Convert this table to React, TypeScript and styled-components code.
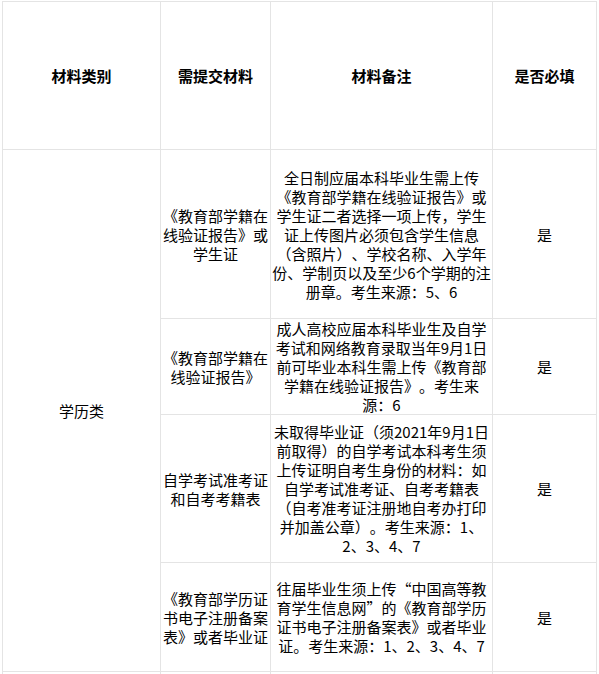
import React from 'react';
import styled, { createGlobalStyle } from 'styled-components';

const GlobalStyle = createGlobalStyle`
  html, body {
    margin: 0;
    padding: 0;
    background: #ffffff;
    overflow: hidden;
  }
  body {
    font-family: "Noto Sans CJK SC", "Noto Sans", sans-serif;
    color: #000000;
  }
`;

const Page = styled.div`
  padding: 1px 0 0 2px;
`;

const Table = styled.table`
  width: 594px;
  table-layout: fixed;
  border-collapse: collapse;
  font-size: 15px;
  line-height: 19px;
  text-spacing-trim: space-all;
  font-feature-settings: "fwid" 0;
`;

const Row = styled.tr<{ $h: number }>`
  height: ${(p) => p.$h}px;
`;

const HeadCell = styled.th`
  border: 1px solid #e4e4e4;
  font-weight: 700;
  text-align: center;
  vertical-align: middle;
  padding: 0;
`;

const Cell = styled.td`
  border: 1px solid #e4e4e4;
  text-align: center;
  vertical-align: middle;
  padding: 0;
  white-space: nowrap;
`;

type Item = {
  h: number;
  material: string[];
  note: string[];
  required: string;
};

const items: Item[] = [
  {
    h: 169,
    material: ['《教育部学籍在', '线验证报告》或', '学生证'],
    note: [
      '全日制应届本科毕业生需上传',
      '《教育部学籍在线验证报告》或',
      '学生证二者选择一项上传，学生',
      '证上传图片必须包含学生信息',
      '（含照片）、学校名称、入学年',
      '份、学制页以及至少6个学期的注',
      '册章。考生来源：5、6',
    ],
    required: '是',
  },
  {
    h: 96,
    material: ['《教育部学籍在', '线验证报告》'],
    note: [
      '成人高校应届本科毕业生及自学',
      '考试和网络教育录取当年9月1日',
      '前可毕业本科生需上传《教育部',
      '学籍在线验证报告》。考生来',
      '源：6',
    ],
    required: '是',
  },
  {
    h: 148,
    material: ['自学考试准考证', '和自考考籍表'],
    note: [
      '未取得毕业证（须2021年9月1日',
      '前取得）的自学考试本科考生须',
      '上传证明自考生身份的材料：如',
      '自学考试准考证、自考考籍表',
      '（自考准考证注册地自考办打印',
      '并加盖公章）。考生来源：1、',
      '2、3、4、7',
    ],
    required: '是',
  },
  {
    h: 109,
    material: ['《教育部学历证', '书电子注册备案', '表》或者毕业证'],
    note: [
      '往届毕业生须上传“中国高等教',
      '育学生信息网”的《教育部学历',
      '证书电子注册备案表》或者毕业',
      '证。考生来源：1、2、3、4、7',
    ],
    required: '是',
  },
];

const Lines: React.FC<{ lines: string[] }> = ({ lines }) => (
  <>
    {lines.map((l, i) => (
      <React.Fragment key={i}>
        {i > 0 && <br />}
        {l}
      </React.Fragment>
    ))}
  </>
);

const App: React.FC = () => {
  return (
    <Page>
      <GlobalStyle />
      <Table>
        <colgroup>
          <col style={{ width: 158 }} />
          <col style={{ width: 110 }} />
          <col style={{ width: 222 }} />
          <col style={{ width: 104 }} />
        </colgroup>
        <thead>
          <Row $h={148}>
            <HeadCell>材料类别</HeadCell>
            <HeadCell>需提交材料</HeadCell>
            <HeadCell>材料备注</HeadCell>
            <HeadCell>是否必填</HeadCell>
          </Row>
        </thead>
        <tbody>
          {items.map((it, i) => (
            <Row $h={it.h} key={i}>
              {i === 0 && <Cell rowSpan={items.length}>学历类</Cell>}
              <Cell>
                <Lines lines={it.material} />
              </Cell>
              <Cell>
                <Lines lines={it.note} />
              </Cell>
              <Cell>{it.required}</Cell>
            </Row>
          ))}
          <Row $h={20}>
            <Cell />
            <Cell />
            <Cell />
            <Cell />
          </Row>
        </tbody>
      </Table>
    </Page>
  );
};

export default App;
